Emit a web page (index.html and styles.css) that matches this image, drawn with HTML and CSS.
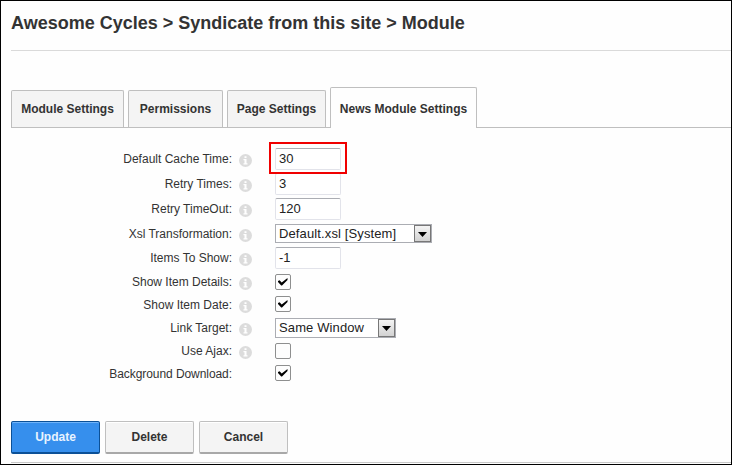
FILE: index.html
```html
<!DOCTYPE html>
<html lang="en">
<head>
<meta charset="utf-8">
<title>Module</title>
<link rel="stylesheet" href="styles.css">
</head>
<body>
<svg width="0" height="0" class="defs">
  <symbol id="info" viewBox="0 0 13 13"><circle cx="6.5" cy="6.5" r="6.5" fill="#dcdcdc"/><path d="M5.5 2.3h2v1.8h-2zM4.5 5h3v4.2h1v1.3h-4V9.2h1V6.3h-1z" fill="#fff"/></symbol>
  <symbol id="tick" viewBox="0 0 12 12"><path d="M1 5L2.6 4.2L4.7 6.4L10.5 2V4L5 9.4H4.2L1 6z" fill="#000"/></symbol>
  <symbol id="arrow" viewBox="0 0 9 5"><path d="M0 0h9L4.5 5z" fill="#000"/></symbol>
</svg>
<main class="page">
  <h1><span>Awesome Cycles &gt; Syndicate from this site &gt; Module</span></h1>
  <nav class="tabs">
    <a class="tab t1">Module Settings</a>
    <a class="tab t2">Permissions</a>
    <a class="tab t3">Page Settings</a>
    <a class="tab t4 active">News Module Settings</a>
  </nav>
  <form class="form">
    <div class="row tall"><label>Default Cache Time:</label><svg class="info"><use href="#info"/></svg><div class="field marked"><span class="input">30</span></div></div>
    <div class="row tall"><label>Retry Times:</label><svg class="info"><use href="#info"/></svg><div class="field"><span class="input">3</span></div></div>
    <div class="row tall"><label>Retry TimeOut:</label><svg class="info"><use href="#info"/></svg><div class="field"><span class="input">120</span></div></div>
    <div class="row mid"><label>Xsl Transformation:</label><svg class="info"><use href="#info"/></svg><div class="field"><span class="select wide">Default.xsl [System]<i><svg><use href="#arrow"/></svg></i></span></div></div>
    <div class="row tall"><label>Items To Show:</label><svg class="info"><use href="#info"/></svg><div class="field"><span class="input">-1</span></div></div>
    <div class="row"><label>Show Item Details:</label><svg class="info"><use href="#info"/></svg><div class="field"><span class="check"><svg><use href="#tick"/></svg></span></div></div>
    <div class="row"><label>Show Item Date:</label><svg class="info"><use href="#info"/></svg><div class="field"><span class="check raised"><svg><use href="#tick"/></svg></span></div></div>
    <div class="row"><label>Link Target:</label><svg class="info"><use href="#info"/></svg><div class="field"><span class="select">Same Window<i><svg><use href="#arrow"/></svg></i></span></div></div>
    <div class="row"><label>Use Ajax:</label><svg class="info"><use href="#info"/></svg><div class="field"><span class="check"></span></div></div>
    <div class="row"><label class="snug">Background Download:</label><span class="info"></span><div class="field"><span class="check raised"><svg><use href="#tick"/></svg></span></div></div>
  </form>
  <div class="actions">
    <button class="primary">Update</button>
    <button>Delete</button>
    <button>Cancel</button>
  </div>
</main>
</body>
</html>
```
FILE: styles.css
```css
*, ::after { box-sizing: border-box; }
body {
  margin: 0;
  background: #fefefe;
  color: #333;
  font: 12px/15px "Liberation Sans", Arial, sans-serif;
}
.defs { position: absolute; }
.page {
  height: 465px;
  border: 1px solid #000;
  padding-left: 10px;
  overflow: hidden;
}
h1 {
  height: 50px;
  margin: 0;
  padding-top: 11px;
  border-bottom: 1px solid #dadada;
  font-size: 18px;
  line-height: 22px;
}
.tabs {
  display: flex;
  align-items: flex-end;
  height: 77px;
  border-bottom: 1px solid #bfbfbf;
}
.tab {
  height: 37px;
  margin-right: 4px;
  border: 1px solid #bfbfbf;
  border-bottom: 0;
  border-radius: 2px 2px 0 0;
  background: #f4f4f4;
  text-align: center;
  font-weight: bold;
  line-height: 36px;
  white-space: nowrap;
}
.t1 { width: 113px; }
.t2 { width: 95px; }
.t3 { width: 99px; }
.t4 { width: 147px; }
.active {
  height: 41px;
  margin-bottom: -1px;
  padding-top: 3px;
  background: #fefefe;
}
.form { margin-top: 18px; }
.row {
  display: grid;
  grid-template-columns: 221px 13px 1fr;
  column-gap: 7px;
  align-items: center;
  height: 23px;
}
.mid { height: 24px; }
.tall { height: 25px; }
label {
  padding-top: 2px;
  text-align: right;
}
.snug { letter-spacing: -.07px; }
.info {
  width: 13px;
  height: 13px;
  position: relative;
  top: 2px;
}
.field {
  position: relative;
  display: flex;
  align-items: center;
  height: 22px;
  margin-left: 16px;
}
.marked { z-index: 1; }
.marked::after {
  content: "";
  position: absolute;
  left: -6px;
  top: -6px;
  width: 78px;
  height: 32px;
  border: 2px solid #f00000;
}
.input {
  width: 66px;
  height: 22px;
  padding-left: 3px;
  border: 1px solid #e2e3ea;
  border-top-color: #abadb3;
  border-radius: 2px;
  background: #fff;
  color: #222;
  font-size: 13px;
  line-height: 19px;
}
.select {
  position: relative;
  width: 121px;
  height: 20px;
  padding-left: 3px;
  border: 1px solid #abadb3;
  background: #fff;
  color: #222;
  font-size: 13px;
  line-height: 18px;
  letter-spacing: .12px;
  white-space: nowrap;
}
.wide {
  width: 157px;
  height: 19px;
  margin-top: 1px;
  line-height: 17px;
}
.select i {
  position: absolute;
  top: 0;
  right: 0;
  bottom: 0;
  width: 17px;
  border: 1px solid #777;
  background: linear-gradient(#f4f4f4, #d2d2d2);
}
.select i svg {
  display: block;
  width: 9px;
  height: 5px;
  margin: 6px 3px;
}
.check {
  width: 16px;
  height: 16px;
  padding: 1px;
  border: 1px solid #8e8f8f;
  border-radius: 2px;
  background: #fdfdfd;
}
.raised { margin-bottom: 2px; }
.check svg {
  display: block;
  width: 12px;
  height: 12px;
}
.actions {
  display: flex;
  gap: 5px;
  height: 78px;
  padding-top: 36px;
  border-bottom: 1px solid #c8c8c8;
}
button {
  width: 89px;
  height: 33px;
  padding: 0 0 1px;
  border: 1px solid #bfbfbf;
  border-bottom: 2px solid #a8a8a8;
  border-radius: 2px;
  background: #f4f4f4;
  box-shadow: inset 0 1px #fff;
  color: #333;
  font: bold 12px "Liberation Sans", Arial, sans-serif;
}
.primary {
  border-color: #0b5097;
  background: #368fed;
  box-shadow: inset 0 1px #70b4fa;
  color: #e8f3ff;
}
```
